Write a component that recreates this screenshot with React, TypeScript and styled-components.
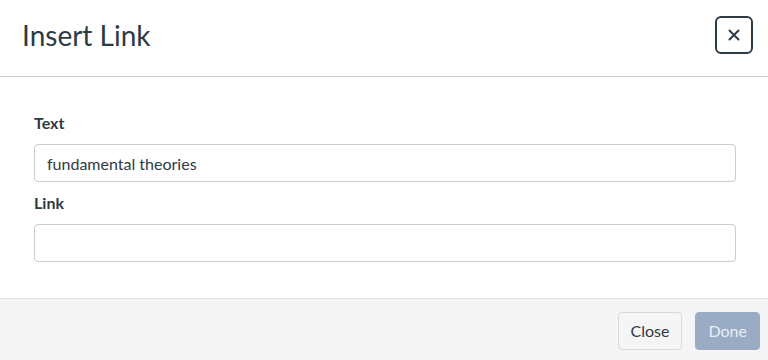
import React from 'react'
import styled, { createGlobalStyle } from 'styled-components'

const GlobalStyle = createGlobalStyle`
  html, body {
    margin: 0;
    padding: 0;
    background: #ffffff;
  }
  body {
    font-family: Lato, "Open Sans", "Liberation Sans", sans-serif;
    color: #2d3b45;
    overflow: hidden;
  }
  * {
    box-sizing: border-box;
  }
`

const Dialog = styled.div`
  width: 768px;
  height: 360px;
  display: flex;
  flex-direction: column;
  background: #ffffff;
`

const Header = styled.header`
  height: 77px;
  flex: none;
  display: flex;
  align-items: center;
  justify-content: space-between;
  padding: 0 15px 0 22px;
  border-bottom: 1px solid #c7cdd1;
`

const Heading = styled.h2`
  margin: 0 0 4px;
  font-size: 28px;
  font-weight: 400;
  line-height: 1.2;
  color: #2d3b45;
`

const CloseIcon = styled.button`
  width: 38px;
  height: 38px;
  margin-bottom: 6px;
  display: flex;
  align-items: center;
  justify-content: center;
  padding: 0;
  background: #ffffff;
  border: 2px solid #2d3b45;
  border-radius: 6px;
  color: #2d3b45;
  cursor: pointer;
`

const Body = styled.div`
  flex: 1;
  padding: 34px 32px 0 34px;
  display: flex;
  flex-direction: column;
`

const Label = styled.label`
  display: block;
  font-size: 16px;
  font-weight: 700;
  line-height: 24px;
  margin-bottom: 9px;
  color: #2d3b45;
`

const Input = styled.input`
  display: block;
  width: 100%;
  height: 38px;
  margin-bottom: 9px;
  padding: 0 12px;
  font-family: inherit;
  font-size: 16px;
  color: #2d3b45;
  background: #ffffff;
  border: 1px solid #c7cdd1;
  border-radius: 4px;
  outline: none;
`

const Footer = styled.footer`
  flex: none;
  height: 62px;
  display: flex;
  justify-content: flex-end;
  align-items: flex-start;
  gap: 13px;
  padding: 13px 8px 0;
  background: #f5f5f5;
  border-top: 1px solid #dfe2e4;
`

const Button = styled.button<{ $primary?: boolean }>`
  height: 38px;
  padding: 0 12px;
  font-family: inherit;
  font-size: 16px;
  line-height: 1;
  border-radius: 4px;
  cursor: pointer;
  color: ${(p) => (p.$primary ? '#e9eef4' : '#2d3b45')};
  background: ${(p) => (p.$primary ? '#9aabc4' : '#f5f5f5')};
  border: 1px solid ${(p) => (p.$primary ? '#9aabc4' : '#d7dadd')};
`

export default function App() {
  return (
    <>
      <GlobalStyle />
      <Dialog>
        <Header>
          <Heading>Insert Link</Heading>
          <CloseIcon aria-label="Close">
            <svg width="12" height="12" viewBox="0 0 12 12">
              <path
                d="M1.5 1.5 L10.5 10.5 M10.5 1.5 L1.5 10.5"
                stroke="currentColor"
                strokeWidth="2"
                strokeLinecap="round"
              />
            </svg>
          </CloseIcon>
        </Header>
        <Body>
          <Label htmlFor="link-text">Text</Label>
          <Input id="link-text" defaultValue="fundamental theories" />
          <Label htmlFor="link-url">Link</Label>
          <Input id="link-url" defaultValue="" />
        </Body>
        <Footer>
          <Button>Close</Button>
          <Button $primary disabled>
            Done
          </Button>
        </Footer>
      </Dialog>
    </>
  )
}
